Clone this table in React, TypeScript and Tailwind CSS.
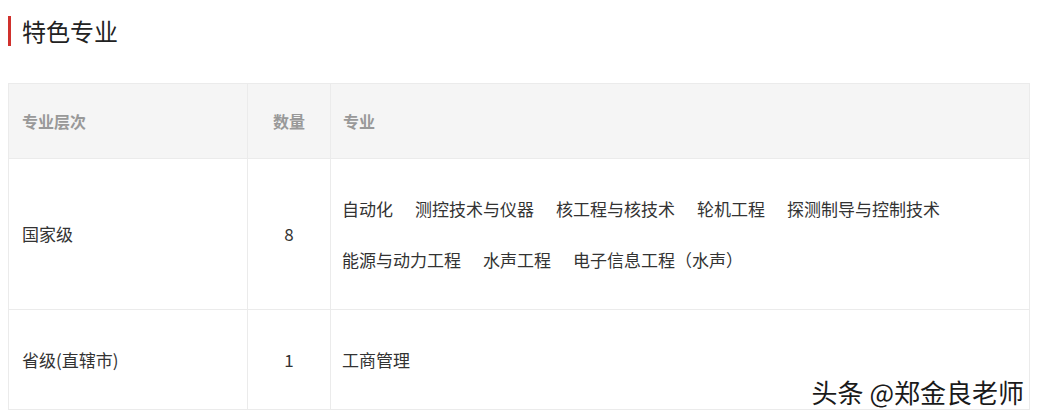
import React from "react";

const font = { fontFamily: '"Noto Sans CJK SC", "Noto Sans", sans-serif' };

export default function App() {
  const row1 = ["自动化", "测控技术与仪器", "核工程与核技术", "轮机工程", "探测制导与控制技术", "能源与动力工程", "水声工程", "电子信息工程（水声）"];
  return (
    <div className="relative w-[1038px] h-[420px] bg-white overflow-hidden" style={font}>
      <div className="px-2 pt-[16px]">
        <div className="flex items-center h-[30px]">
          <div className="w-[3px] h-[30px] bg-[#d0312d]" />
          <div className="ml-[11px] text-[24px] leading-[30px] text-[#222]">特色专业</div>
        </div>
        <table className="mt-[37px] w-[1022px] border-collapse table-fixed text-[17px]">
          <colgroup>
            <col className="w-[239px]" />
            <col className="w-[83px]" />
            <col />
          </colgroup>
          <thead>
            <tr className="h-[75px] bg-[#f5f5f5] text-[16px]">
              <th className="border border-[#ebebeb] pl-[13px] text-left font-bold text-[#999]">专业层次</th>
              <th className="border border-[#ebebeb] text-center font-bold text-[#999]">数量</th>
              <th className="border border-[#ebebeb] pl-[12px] text-left font-bold text-[#999]">专业</th>
            </tr>
          </thead>
          <tbody className="text-[#333]">
            <tr className="h-[151px]">
              <td className="border border-[#ebebeb] pl-[13px]">国家级</td>
              <td className="border border-[#ebebeb] text-center">8</td>
              <td className="border border-[#ebebeb] pl-[11px] pr-[13px] py-[24px]">
                <div className="flex flex-wrap gap-x-[22px] leading-[51px] w-[620px]">
                  {row1.map((m) => (
                    <span key={m}>{m}</span>
                  ))}
                </div>
              </td>
            </tr>
            <tr className="h-[100px]">
              <td className="border border-[#ebebeb] pl-[13px]">省级(直辖市)</td>
              <td className="border border-[#ebebeb] text-center">1</td>
              <td className="border border-[#ebebeb] pl-[11px]">工商管理</td>
            </tr>
          </tbody>
        </table>
      </div>
      <div className="absolute right-[14px] top-[376px] text-[26px] leading-[32px] text-[#1a1a1a] [text-shadow:1px_1px_0_#fff,-1px_-1px_0_#fff]">
        头条 @郑金良老师
      </div>
    </div>
  );
}
